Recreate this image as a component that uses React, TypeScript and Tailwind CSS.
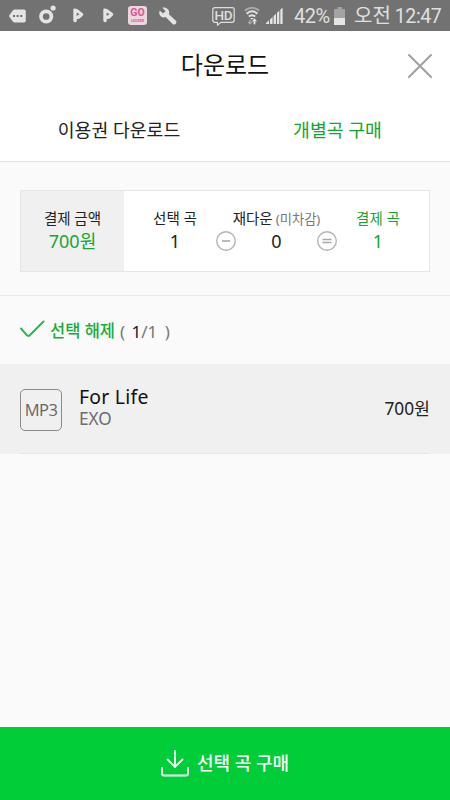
import type { ReactNode } from 'react'

function ChatIcon() {
  return (
    <svg width="17" height="14" viewBox="0 0 17 14" className="shrink-0">
      <path d="M5.500 0.500h9.500a1.800 1.800 0 0 1 1.800 1.800v9.400a1.800 1.800 0 0 1-1.800 1.800H5.500a2 2 0 0 1-1.500-.7L0.500 8a1.500 1.500 0 0 1 0-1.900L4 1.200a2 2 0 0 1 1.500-.7z" fill="#e4e4e4" />
      <path d="M4 6h2v2H4zM7.600 6h2v2h-2zM11.200 6h2v2h-2z" fill="#6f6f6f" />
    </svg>
  )
}

function MelonIcon() {
  return (
    <svg width="17" height="20" viewBox="0 0 17 20" className="shrink-0">
      <circle cx="7.200" cy="12.500" r="5.200" fill="none" stroke="#e4e4e4" strokeWidth="3.700" />
      <circle cx="14.100" cy="4" r="2.600" fill="#e4e4e4" />
    </svg>
  )
}

function PlayIcon() {
  return (
    <svg width="11" height="15" viewBox="0 0 11 15" className="shrink-0">
      <path
        fillRule="evenodd"
        d="M0.300 1.800Q0.300 0 2 .5L4.500 1.200 9.800 5.200Q11 6.300 9.800 7.400L7 10.300Q5.500 11.500 3.800 10.800V12.700Q3.500 14.200 2 14.200 0.300 14 0.300 12.500zM3.700 4.600v3.400L6.500 6.300z"
        fill="#e4e4e4"
      />
    </svg>
  )
}

function WrenchIcon() {
  return (
    <svg width="18" height="18" viewBox="0 0 18 18" className="shrink-0">
      <path
        d="M3.400 0.700 6.600 3.900 4.100 6.500 0.700 3.400C-0.200 6 0.300 8 1.700 9.200c1.500 1.300 3.400 1.500 5 .9l6.900 6.900c.7.8 1.900.8 2.800 0l.6-.6c.7-.8.6-2-.1-2.700L9.900 7.200c.7-1.800.3-3.600-1-5C7.200.7 5.300.1 3.400.7z"
        fill="#e4e4e4"
      />
    </svg>
  )
}

function HdIcon() {
  return (
    <div className="relative h-[19px] w-[23px] shrink-0">
      <svg width="23" height="19" viewBox="0 0 23 19">
        <path
          d="M2.800 0.700h17.400a2 2 0 0 1 2 2v10.600a2 2 0 0 1-2 2H9l-3.500 2.800v-2.800H2.800a2 2 0 0 1-2-2V2.700a2 2 0 0 1 2-2z"
          fill="none"
          stroke="#dedede"
          strokeWidth="1.200"
        />
      </svg>
      <span className="absolute inset-x-0 top-[1px] text-center font-[Roboto] text-[13.500px] leading-[15px] font-medium tracking-[-0.300px] text-[#dedede]">
        HD
      </span>
    </div>
  )
}

function WifiIcon() {
  return (
    <svg width="16" height="18" viewBox="0 0 16 18" className="shrink-0">
      <g fill="none">
        <path d="M0.800 3.800C5-.2 11-.2 15.200 3.800" stroke="#a8a8a8" strokeWidth="1.900" />
        <path d="M2.600 6.700C6 3.700 10 3.700 13.400 6.700" stroke="#e4e4e4" strokeWidth="2" />
        <path d="M4.800 9.600C7 7.700 9 7.700 11.200 9.600" stroke="#e4e4e4" strokeWidth="2" />
      </g>
      <path d="M6.300 11h3.400L8 12.800z" fill="#e4e4e4" />
      <path d="M6 12.500v4M4.300 15l1.700 1.700L7.700 15" stroke="#b0b0b0" strokeWidth="1.200" fill="none" />
      <path d="M10.500 17.300v-3" stroke="#e4e4e4" strokeWidth="1.800" />
      <path d="M7.900 14.500l2.600-3.200 2.600 3.200z" fill="#e4e4e4" />
    </svg>
  )
}

function SignalIcon() {
  return (
    <svg width="18" height="17" viewBox="0 0 18 17" className="shrink-0">
      <path
        d="M0 17v-1l3-2.800V17zM4 17v-4.600l2.600-2.400v7zM7.600 17V9.100l2.400-2.300V17zM11 17V5.800l2.300-2.100V17zM14.300 17V2.700L16.600 0.500V17z"
        fill="#e4e4e4"
      />
    </svg>
  )
}

function BatteryIcon() {
  return (
    <svg width="12" height="18" viewBox="0 0 12 18" className="shrink-0">
      <path d="M3.500 0h4.500v2H11v9.500H0V2h3.500z" fill="#a3a3a3" />
      <path d="M0 11h11v7H0z" fill="#e4e4e4" />
    </svg>
  )
}

function StatusBar() {
  return (
    <div className="flex h-[31px] shrink-0 items-center bg-[#727272] pl-[9px] text-[#e0e0e0]">
      <ChatIcon />
      <div className="-mt-1 ml-[13px] flex"><MelonIcon /></div>
      <div className="ml-[17px] flex"><PlayIcon /></div>
      <div className="ml-[19px] flex"><PlayIcon /></div>
      <div className="ml-[14px] flex h-[19px] w-[19px] shrink-0 flex-col items-center rounded-[3px] bg-[#ead7df] font-[Roboto] font-bold text-[#dc5590]">
        <span className="mt-[1px] text-[10.500px] leading-[12px]">GO</span>
        <span className="text-[3.500px] leading-[5px]">LOCKER</span>
      </div>
      <div className="ml-[12px] flex"><WrenchIcon /></div>
      <div className="mt-[2px] ml-[35px] flex"><HdIcon /></div>
      <div className="ml-[9px] flex"><WifiIcon /></div>
      <div className="ml-[6px] flex"><SignalIcon /></div>
      <span className="ml-[10px] w-[40px] font-[Roboto] text-[20px] tracking-[-0.500px] whitespace-nowrap">42%</span>
      <div className="flex"><BatteryIcon /></div>
      <span className="mt-[2px] ml-[8px] text-[20px] whitespace-nowrap">
        오전<span className="ml-[4px] font-[Roboto] text-[19.500px] tracking-[-0.400px]">12:47</span>
      </span>
    </div>
  )
}

function Column({ label, value, className = '' }: { label: ReactNode; value: string; className?: string }) {
  return (
    <div className={`flex flex-col items-center whitespace-nowrap ${className}`}>
      <span className="h-[22px] text-[14.500px] leading-[22px]">{label}</span>
      <span className="text-[18px] leading-[24px]">{value}</span>
    </div>
  )
}

function Operator({ d }: { d: string }) {
  return (
    <svg width="20" height="20" viewBox="0 0 20 20" className="mt-[24px] shrink-0">
      <circle cx="10" cy="10" r="9.300" fill="none" stroke="#b5b5b5" strokeWidth="1.400" />
      <path d={d} stroke="#a8a8a8" strokeWidth="1.600" />
    </svg>
  )
}

export default function App() {
  return (
    <div className="flex h-[800px] w-[450px] flex-col overflow-hidden bg-[#fafafa] font-['Noto_Sans','Noto_Sans_CJK_KR',sans-serif] text-[#222]">
      <StatusBar />

      <header className="h-[131px] shrink-0 border-b border-[#e2e2e2] bg-white">
        <div className="grid h-[68px] grid-cols-[50px_1fr_50px] items-center">
          <h1 className="col-start-2 text-center text-[24px] leading-[30px] text-[#111]">다운로드</h1>
          <svg width="24" height="24" viewBox="0 0 24 24" className="mt-[2px] ml-[8px]">
            <path d="M1 1l22 22M23 1L1 23" stroke="#a0a0a0" strokeWidth="2" strokeLinecap="round" />
          </svg>
        </div>
        <nav className="grid h-[61px] grid-cols-[238px_199px] items-center text-center text-[18.300px] leading-[28px]">
          <span>이용권 다운로드</span>
          <span className="text-[#12a52f]">개별곡 구매</span>
        </nav>
      </header>

      <section className="h-[134px] shrink-0 border-b border-[#e9e9e9] px-5 pt-[28px]">
        <div className="flex h-[82px] border border-[#e6e6e6] bg-white">
          <div className="w-[103px] bg-[#f0f0f0] pt-[16px]">
            <Column label="결제 금액" value="700원" className="[&>span:last-child]:text-[#12a83a]" />
          </div>
          <div className="flex flex-1 pt-[16px]">
            <Column label="선택 곡" value="1" className="ml-[20px] w-[62px]" />
            <div className="ml-[10px]">
              <Operator d="M6 10h8" />
            </div>
            <Column
              label={<>재다운<span className="ml-[3px] text-[13.300px] text-[#777]">(미차감)</span></>}
              value="0"
              className="w-[81px]"
            />
            <Operator d="M5.500 8.500h9M5.500 11.500h9" />
            <Column label="결제 곡" value="1" className="ml-[10px] w-[62px] text-[#12a52f]" />
          </div>
        </div>
      </section>

      <div className="flex h-[68px] shrink-0 items-center pl-5">
        <svg width="25" height="18" viewBox="0 0 25 18" className="mt-[-2px]">
          <path d="M1 8.500L7 15.300Q8.500 16.500 10 15L23.500 1.500" fill="none" stroke="#2bb94c" strokeWidth="2" strokeLinecap="round" />
        </svg>
        <span className="mt-[3px] ml-[5px] text-[16.500px] font-medium text-[#18ac38]">선택 해제</span>
        <span className="mt-[3px] ml-[5px] text-[17px] text-[#777]">
          ( <span className="ml-[2px] text-[#222]">1</span>/1 <span className="ml-[3px]">)</span>
        </span>
      </div>

      <div className="h-[90px] shrink-0 bg-[#f0f0f0] px-5">
        <div className="flex h-full items-center border-b border-[#e6e6e6]">
          <div className="mt-[2px] flex h-[42px] w-[42px] items-center justify-center rounded-[5px] border border-[#8b8b8b] pt-[1px] font-['Open_Sans'] text-[16.500px] tracking-[-0.500px] text-[#666]">
            MP3
          </div>
          <div className="mt-[-3px] ml-[17px] flex flex-1 flex-col">
            <span className="text-[19.400px] leading-[23px] tracking-[0.250px] text-[#111]">For Life</span>
            <span className="text-[17.200px] leading-[22px] text-[#6c6c6c]">EXO</span>
          </div>
          <span className="text-[17.300px]">700원</span>
        </div>
      </div>

      <button className="mt-auto flex h-[73px] w-full shrink-0 items-center justify-center bg-[#00cd37] text-white">
        <svg width="28" height="27" viewBox="0 0 28 27" fill="none" stroke="white" strokeWidth="1.800" strokeLinecap="round">
          <path d="M14 1v16M6.500 9.500L14 17l7.500-7.500" />
          <path d="M1 18v5.500a2 2 0 0 0 2 2h22a2 2 0 0 0 2-2V18" />
        </svg>
        <span className="ml-[8px] text-[18px] font-medium">선택 곡 구매</span>
      </button>
    </div>
  )
}
